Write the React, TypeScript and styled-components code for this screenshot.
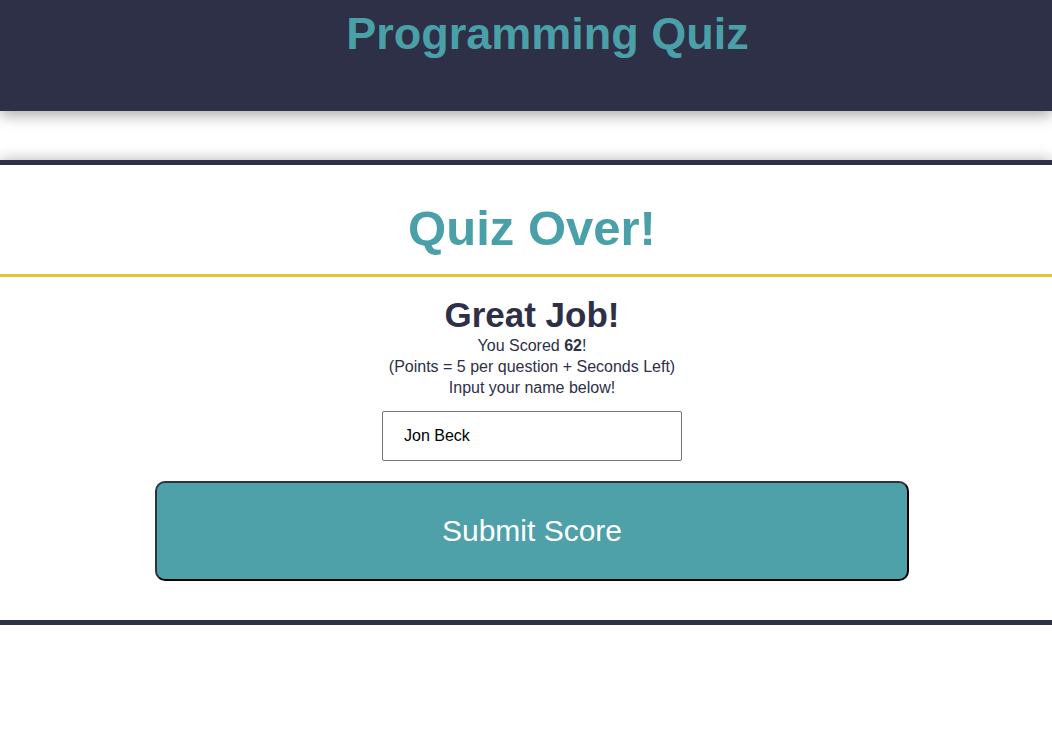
import React from "react";
import styled, { createGlobalStyle } from "styled-components";

const GlobalStyle = createGlobalStyle`
  html, body {
    margin: 0;
    padding: 0;
    background: #ffffff;
    font-family: "Liberation Sans", Arial, sans-serif;
  }
`;

const Header = styled.header`
  background: #2e3047;
  height: 111px;
  box-sizing: border-box;
  padding: 8px 0 0 43px;
  box-shadow: 0 4px 14px rgba(0, 0, 0, 0.35);
  position: relative;
  z-index: 1;
`;

const SiteTitle = styled.h1`
  margin: 0;
  text-align: center;
  color: #4aa0a8;
  font-size: 45px;
  font-weight: 700;
`;

const Card = styled.main`
  margin-top: 49px;
  border-top: 5px solid #2e3047;
  border-bottom: 5px solid #2e3047;
  box-shadow: 0 0 14px rgba(0, 0, 0, 0.3);
  background: #ffffff;
`;

const CardHead = styled.div`
  padding: 36px 0 18px 12px;
  border-bottom: 3px solid #e1c632;
  text-align: center;
`;

const CardTitle = styled.h2`
  margin: 0;
  color: #4aa0a8;
  font-size: 49px;
  font-weight: 700;
  line-height: 55px;
`;

const CardBody = styled.div`
  display: flex;
  flex-direction: column;
  align-items: center;
  padding: 18px 0 39px 12px;
`;

const Praise = styled.h3`
  margin: 0;
  color: #2e3047;
  font-size: 35px;
  font-weight: 700;
  line-height: 40px;
`;

const Line = styled.p`
  margin: 0;
  color: #2e3047;
  font-size: 16px;
  line-height: 21px;
  text-align: center;
`;

const NameInput = styled.input`
  margin-top: 13px;
  width: 300px;
  height: 50px;
  box-sizing: border-box;
  border: 1px solid #767676;
  border-radius: 2px;
  padding: 0 21px;
  font-family: "Liberation Sans", Arial, sans-serif;
  font-size: 16px;
  color: #000;
  outline: none;
`;

const SubmitButton = styled.button`
  margin-top: 20px;
  width: 754px;
  height: 100px;
  box-sizing: border-box;
  background: #4ea1a8;
  color: #ffffff;
  border: 2px solid;
  border-color: #2e3047 #000 #000 #2e3047;
  border-radius: 10px;
  font-family: "Liberation Sans", Arial, sans-serif;
  font-size: 30px;
  cursor: pointer;
`;

export default function App() {
  return (
    <>
      <GlobalStyle />
      <Header>
        <SiteTitle>Programming Quiz</SiteTitle>
      </Header>
      <Card>
        <CardHead>
          <CardTitle>Quiz Over!</CardTitle>
        </CardHead>
        <CardBody>
          <Praise>Great Job!</Praise>
          <Line>
            You Scored <b>62</b>!
          </Line>
          <Line>(Points = 5 per question + Seconds Left)</Line>
          <Line>Input your name below!</Line>
          <NameInput defaultValue="Jon Beck" />
          <SubmitButton>Submit Score</SubmitButton>
        </CardBody>
      </Card>
    </>
  );
}
